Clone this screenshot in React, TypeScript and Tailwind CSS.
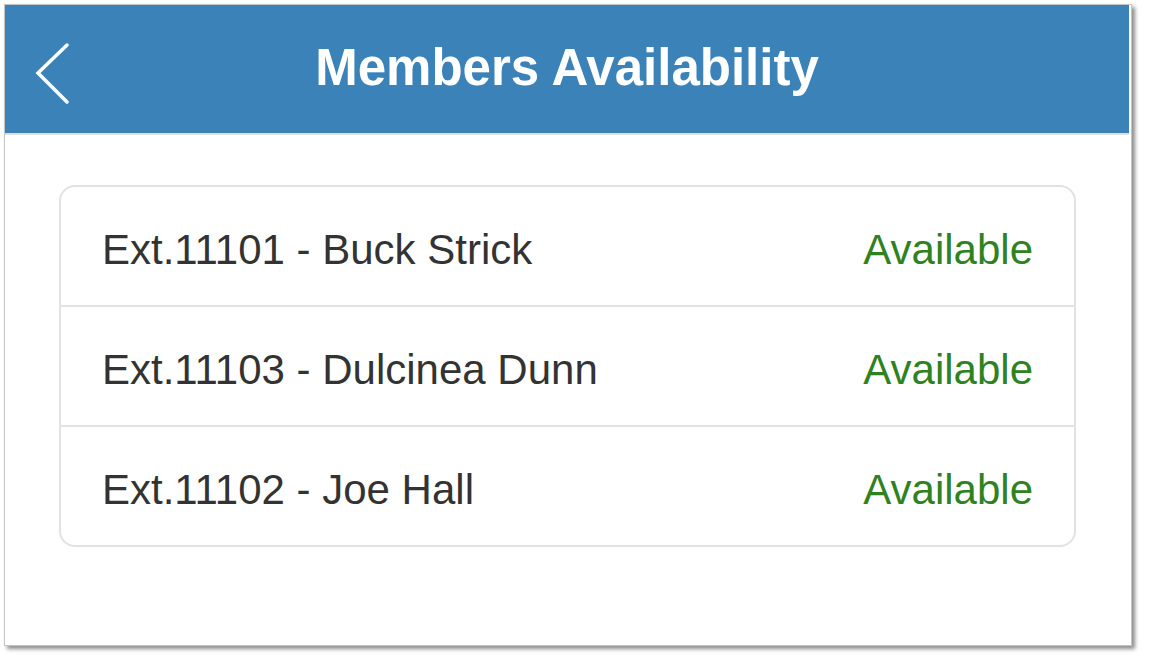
import React from "react";

const rows = [
  { name: "Ext.11101 - Buck Strick", status: "Available" },
  { name: "Ext.11103 - Dulcinea Dunn", status: "Available" },
  { name: "Ext.11102 - Joe Hall", status: "Available" },
];

export default function App() {
  return (
    <div
      className="w-[1150px] h-[665px] bg-white pl-[4px] pt-[4px]"
      style={{ fontFamily: '"Liberation Sans", Arial, Helvetica, sans-serif' }}
    >
      <div className="w-[1128px] h-[642px] border border-[#c4c4c4] bg-white shadow-[3px_3px_4px_rgba(0,0,0,0.45)] flex flex-col">
        <div className="h-[128px] bg-[#3b82b9] mr-[2px] relative flex items-center justify-center border-b-[2px] border-[#dedede] box-content">
          <svg
            className="absolute left-[24px] top-[32px]"
            width="44"
            height="70"
            viewBox="0 0 44 70"
            fill="none"
          >
            <path
              d="M38 8 L9 36 L38 65"
              stroke="white"
              strokeWidth="3.5"
              strokeLinecap="round"
              strokeLinejoin="miter"
            />
          </svg>
          <h1 className="text-white font-bold text-[51px] leading-none mb-[3px]">
            Members Availability
          </h1>
        </div>
        <div className="pt-[50px] pl-[54px] pr-[54px]">
          <div className="border-[2px] border-[#e2e2e2] rounded-[16px] w-[1017px]">
            {rows.map((r, i) => (
              <div
                key={i}
                className={`flex items-center justify-between pl-[41px] pr-[41px] pt-[8px] ${
                  i < rows.length - 1 ? "h-[120px] border-b-[2px] border-[#e2e2e2]" : "h-[118px]"
                }`}
              >
                <span className="text-[42px] text-[#333333] leading-none">{r.name}</span>
                <span className="text-[42px] text-[#2f8220] leading-none">{r.status}</span>
              </div>
            ))}
          </div>
        </div>
      </div>
    </div>
  );
}
